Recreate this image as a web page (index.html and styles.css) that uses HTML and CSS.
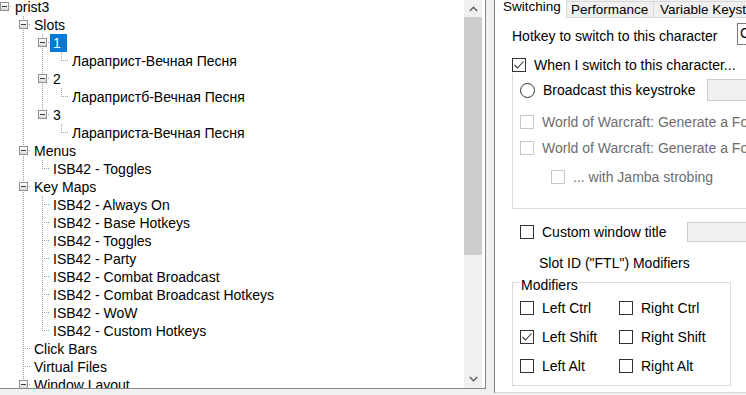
FILE: index.html
```html
<!DOCTYPE html>
<html>
<head>
<meta charset="utf-8">
<link rel="stylesheet" href="styles.css">
</head>
<body>
<div class="app">
  <div class="tree-panel">
    <div class="tree">
      <div class="tree-inner">
        <div class="row"><span class="n"><span class="box"></span></span><span class="lbl">prist3</span></div>
        <div class="row"><span class="g"></span><span class="n tb"><span class="box"></span></span><span class="lbl">Slots</span></div>
        <div class="row"><span class="g"></span><span class="g v"></span><span class="n tb"><span class="box"></span></span><span class="lbl sel">1</span></div>
        <div class="row"><span class="g"></span><span class="g v"></span><span class="g v"></span><span class="n t"></span><span class="lbl">Лараприст-Вечная Песня</span></div>
        <div class="row"><span class="g"></span><span class="g v"></span><span class="n tb"><span class="box"></span></span><span class="lbl">2</span></div>
        <div class="row"><span class="g"></span><span class="g v"></span><span class="g v"></span><span class="n t"></span><span class="lbl">Ларапристб-Вечная Песня</span></div>
        <div class="row"><span class="g"></span><span class="g v"></span><span class="n t"><span class="box"></span></span><span class="lbl">3</span></div>
        <div class="row"><span class="g"></span><span class="g v"></span><span class="g"></span><span class="n t"></span><span class="lbl">Лараприста-Вечная Песня</span></div>
        <div class="row"><span class="g"></span><span class="n tb"><span class="box"></span></span><span class="lbl">Menus</span></div>
        <div class="row"><span class="g"></span><span class="g v"></span><span class="n t"></span><span class="lbl">ISB42 - Toggles</span></div>
        <div class="row"><span class="g"></span><span class="n tb"><span class="box"></span></span><span class="lbl">Key Maps</span></div>
        <div class="row"><span class="g"></span><span class="g v"></span><span class="n tb"></span><span class="lbl">ISB42 - Always On</span></div>
        <div class="row"><span class="g"></span><span class="g v"></span><span class="n tb"></span><span class="lbl">ISB42 - Base Hotkeys</span></div>
        <div class="row"><span class="g"></span><span class="g v"></span><span class="n tb"></span><span class="lbl">ISB42 - Toggles</span></div>
        <div class="row"><span class="g"></span><span class="g v"></span><span class="n tb"></span><span class="lbl">ISB42 - Party</span></div>
        <div class="row"><span class="g"></span><span class="g v"></span><span class="n tb"></span><span class="lbl">ISB42 - Combat Broadcast</span></div>
        <div class="row"><span class="g"></span><span class="g v"></span><span class="n tb"></span><span class="lbl">ISB42 - Combat Broadcast Hotkeys</span></div>
        <div class="row"><span class="g"></span><span class="g v"></span><span class="n tb"></span><span class="lbl">ISB42 - WoW</span></div>
        <div class="row"><span class="g"></span><span class="g v"></span><span class="n t"></span><span class="lbl">ISB42 - Custom Hotkeys</span></div>
        <div class="row"><span class="g"></span><span class="n tb"></span><span class="lbl">Click Bars</span></div>
        <div class="row"><span class="g"></span><span class="n tb"></span><span class="lbl">Virtual Files</span></div>
        <div class="row"><span class="g"></span><span class="n tb"><span class="box"></span></span><span class="lbl">Window Layout</span></div>
      </div>
    </div>
    <div class="vscroll">
      <div class="sb-btn"><svg width="9" height="6" viewBox="0 0 9 6"><polyline points="0.8,5 4.5,1.3 8.2,5" fill="none" stroke="#606060" stroke-width="1.5"/></svg></div>
      <div class="sb-thumb"></div>
      <div class="sb-track"></div>
      <div class="sb-btn down"><svg width="9" height="6" viewBox="0 0 9 6"><polyline points="0.8,1 4.5,4.7 8.2,1" fill="none" stroke="#606060" stroke-width="1.5"/></svg></div>
    </div>
  </div>
  <div class="splitter"></div>
  <div class="tabctl">
    <div class="tabstrip">
      <div class="tab active">Switching</div>
      <div class="tab perf">Performance</div>
      <div class="tab var">Variable Keystrokes</div>
    </div>
    <div class="page">
      <div class="hk-row">
        <span>Hotkey to switch to this character</span>
        <div class="textbox">Ctrl+1</div>
      </div>
      <div class="chk-row when">
        <span class="cb"><svg width="12" height="12" viewBox="0 0 12 12"><polyline points="1.5,6 4.5,9 10.5,2.5" fill="none" stroke="#333" stroke-width="1.1"/></svg></span>
        <span>When I switch to this character...</span>
      </div>
      <div class="grp1">
        <div class="radio-row">
          <div class="chk-row">
            <span class="radio"></span>
            <span>Broadcast this keystroke</span>
          </div>
          <div class="textbox disabled"></div>
        </div>
        <div class="chk-row off wow1">
          <span class="cb"></span>
          <span>World of Warcraft: Generate a Focus event</span>
        </div>
        <div class="chk-row off wow2">
          <span class="cb"></span>
          <span>World of Warcraft: Generate a Focus event</span>
        </div>
        <div class="chk-row off jamba">
          <span class="cb"></span>
          <span>... with Jamba strobing</span>
        </div>
      </div>
      <div class="custom-row">
        <div class="chk-row">
          <span class="cb"></span>
          <span>Custom window title</span>
        </div>
        <div class="textbox disabled short"></div>
      </div>
      <div class="slot-label">Slot ID ("FTL") Modifiers</div>
      <div class="grp2">
        <span class="legend">Modifiers</span>
        <div class="mods">
          <div class="chk-row"><span class="cb"></span><span>Left Ctrl</span></div>
          <div class="chk-row"><span class="cb"></span><span>Right Ctrl</span></div>
          <div class="chk-row"><span class="cb"><svg width="12" height="12" viewBox="0 0 12 12"><polyline points="1.5,6 4.5,9 10.5,2.5" fill="none" stroke="#333" stroke-width="1.1"/></svg></span><span>Left Shift</span></div>
          <div class="chk-row"><span class="cb"></span><span>Right Shift</span></div>
          <div class="chk-row"><span class="cb"></span><span>Left Alt</span></div>
          <div class="chk-row"><span class="cb"></span><span>Right Alt</span></div>
        </div>
      </div>
    </div>
  </div>
</div>
</body>
</html>
```

FILE: styles.css
```css
:root {
  --dv: repeating-linear-gradient(to bottom, #a0a0a0 0 1px, transparent 1px 2px);
  --dh: repeating-linear-gradient(to right, #a0a0a0 0 1px, transparent 1px 2px);
}
* { box-sizing: border-box; }
html, body { margin: 0; padding: 0; }
body {
  width: 746px;
  height: 395px;
  overflow: hidden;
  background: #f0f0f0;
  font-family: "Liberation Sans", Arial, sans-serif;
  font-size: 14px;
  color: #000;
}
.app {
  display: flex;
  align-items: flex-start;
  width: 1000px;
  height: 395px;
}

/* ---------- tree ---------- */
.tree-panel {
  flex: none;
  width: 486px;
  height: 389px;
  display: flex;
  background: #fff;
  border-right: 1px solid #828790;
  border-bottom: 1px solid #828790;
}
.tree { flex: 1; overflow: hidden; }
.tree-inner { margin-top: -2px; }
.row {
  display: flex;
  height: 18px;
  white-space: nowrap;
}
.g { flex: none; width: 19px; height: 18px; }
.g.v { background: var(--dv) 4px 0 / 1px 100% no-repeat; }
.n {
  flex: none;
  width: 12px;
  height: 18px;
  display: flex;
  align-items: flex-start;
  background: var(--dh) 4px 8px / 8px 1px no-repeat;
}
.n.t {
  background: var(--dh) 4px 8px / 8px 1px no-repeat, var(--dv) 4px 0 / 1px 9px no-repeat;
}
.n.tb {
  background: var(--dh) 4px 8px / 8px 1px no-repeat, var(--dv) 4px 0 / 1px 18px no-repeat;
}
.box {
  width: 9px;
  height: 9px;
  margin-top: 4px;
  border: 1px solid #919191;
  background: linear-gradient(#ffffff, #dadada);
  display: flex;
  align-items: center;
  justify-content: center;
}
.box::after {
  content: "";
  width: 5px;
  height: 1px;
  background: #3c3c3c;
}
.lbl {
  height: 18px;
  line-height: 18px;
  padding: 0 4px 0 3px;
}
.lbl.sel { background: #0078d7; color: #fff; padding-right: 6px; }

/* ---------- scrollbar ---------- */
.vscroll {
  flex: none;
  width: 18px;
  margin-right: 3px;
  display: flex;
  flex-direction: column;
  background: #f0f0f0;
}
.sb-btn {
  flex: none;
  height: 17px;
  display: flex;
  align-items: center;
  justify-content: center;
}
.sb-btn.down { align-items: flex-start; padding-top: 5px; }
.sb-btn svg { display: block; }
.sb-thumb { flex: none; height: 238px; background: #cdcdcd; }
.sb-track { flex: 1; }

.splitter { flex: none; width: 8px; height: 395px; }

/* ---------- tab control ---------- */
.tabctl {
  flex: none;
  width: 420px;
  height: 393px;
  border-left: 1px solid #828790;
  display: flex;
  flex-direction: column;
}
.tabstrip { flex: none; display: flex; height: 18px; }
.tab {
  flex: none;
  font-size: 13.5px;
  height: 17px;
  margin-top: 1px;
  line-height: 13px;
  padding-top: 1px;
  padding-left: 4px;
  background: #f0f0f0;
  border: 1px solid #d9d9d9;
  border-left: none;
  white-space: nowrap;
}
.tab.active {
  width: 72px;
  height: 18px;
  margin-top: 0;
  padding-top: 0;
  padding-left: 8px;
  background: #fff;
  border: none;
  border-right: 1px solid #d9d9d9;
}
.tab.perf { width: 87px; }
.tab.var { width: 200px; padding-left: 6px; }

.page {
  flex: none;
  height: 375px;
  background: #fff;
  border-bottom: 1px solid #d9d9d9;
  padding-left: 17px;
  display: flex;
  flex-direction: column;
  white-space: nowrap;
}
.hk-row {
  margin-top: 7px;
  height: 22px;
  display: grid;
  grid-template-columns: 225px 80px;
  align-items: center;
}
.textbox {
  height: 22px;
  border: 1px solid #7a7a7a;
  background: #fff;
  padding-left: 2px;
  line-height: 19px;
}
.hk-row .textbox { align-self: start; margin-top: -2px; }
.textbox.disabled { background: #f0f0f0; border-color: #cccccc; }
.textbox.short { height: 20px; }

.chk-row {
  display: flex;
  align-items: center;
  gap: 8px;
  height: 14px;
  line-height: 16px;
}
.cb {
  flex: none;
  width: 14px;
  height: 14px;
  border: 1px solid #333;
  background: #fff;
  display: flex;
  align-items: center;
  justify-content: center;
}
.cb svg { display: block; }
.radio {
  flex: none;
  width: 15px;
  height: 15px;
  border: 1px solid #333;
  border-radius: 50%;
  background: #fff;
}
.when { margin-top: 11px; }

.grp1 {
  margin-top: 1px;
  border-left: 1px solid #dcdcdc;
  border-bottom: 1px solid #dcdcdc;
  padding-left: 7px;
  padding-bottom: 24px;
  display: flex;
  flex-direction: column;
}
.radio-row {
  margin-top: 6px;
  height: 22px;
  display: grid;
  grid-template-columns: 187px 80px;
  align-items: center;
}
.off { color: #6d6d6d; }
.off .cb { border-color: #c8c8c8; }
.wow1 { margin-top: 14px; }
.wow2 { margin-top: 12px; }
.jamba { margin-top: 15px; padding-left: 31px; }

.custom-row {
  margin-top: 13px;
  height: 20px;
  padding-left: 8px;
  display: grid;
  grid-template-columns: 167px 80px;
  align-items: center;
}
.custom-row .textbox { margin-top: -1px; }
.slot-label {
  margin-top: 13px;
  line-height: 16px;
  padding-left: 27px;
}
.grp2 {
  margin-top: 11px;
  width: 219px;
  height: 104px;
  border: 1px solid #dcdcdc;
  display: flex;
  flex-direction: column;
}
.legend {
  align-self: flex-start;
  margin-top: -6px;
  margin-left: 7px;
  padding: 0 1px;
  line-height: 16px;
  background: #fff;
}
.mods {
  margin-top: 8px;
  padding-left: 7px;
  display: grid;
  grid-template-columns: 99px 99px;
  grid-auto-rows: 14px;
  row-gap: 15px;
}
```
